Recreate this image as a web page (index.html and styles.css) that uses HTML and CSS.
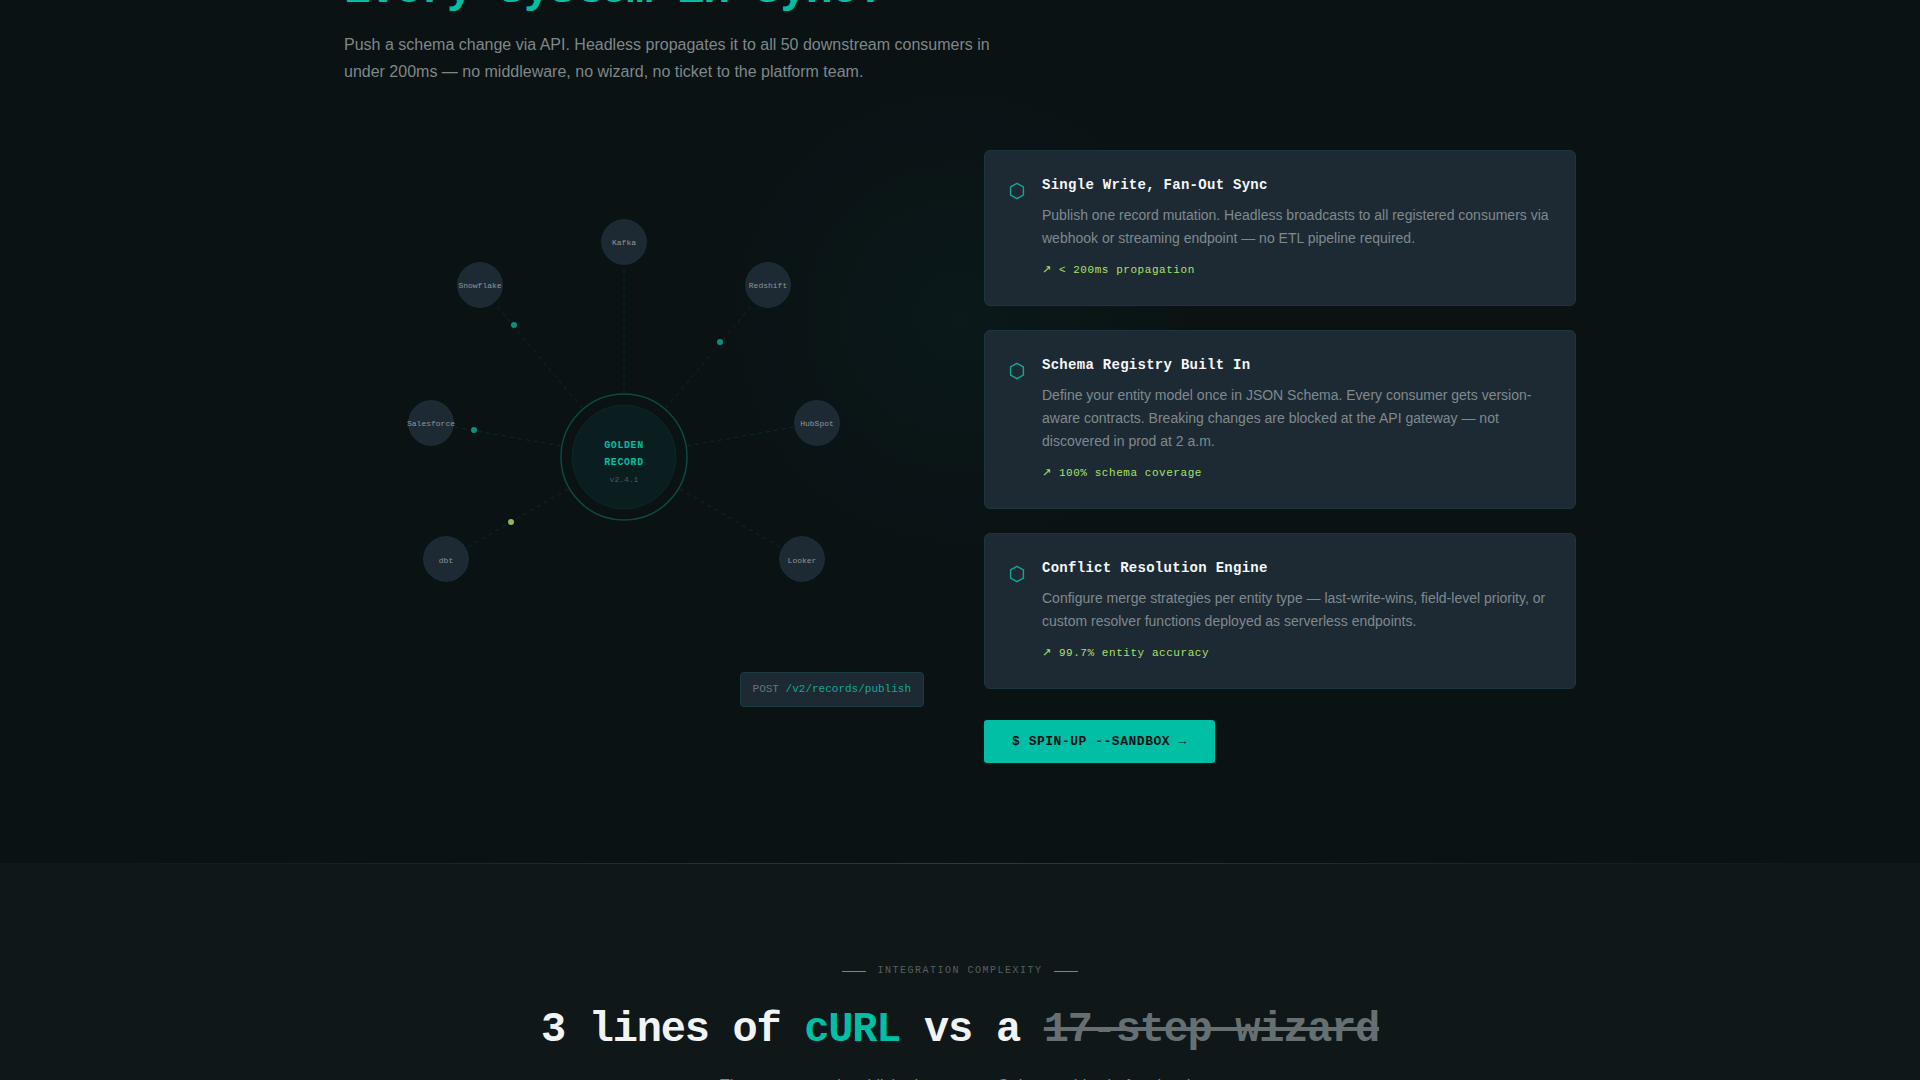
FILE: index.html
```html
<!DOCTYPE html>
<html lang="en">
<head>
    <meta charset="UTF-8">
    <meta name="viewport" content="width=device-width, initial-scale=1.0">
    <title>Headless</title>
    <link rel="stylesheet" href="styles.css">
</head>
<body>
    <section class="sync">
        <div class="container">
            <h2 class="sync-title">Every system in sync.</h2>
            <p class="sync-lead">Push a schema change via API. Headless propagates it to all 50 downstream consumers in under 200ms — no middleware, no wizard, no ticket to the platform team.</p>

            <div class="sync-grid">
                <div class="hub">
                    <svg class="hub-map" viewBox="0 0 560 560" role="img" aria-label="Golden record hub">
                        <!-- Spokes -->
                        <g class="spokes">
                            <line x1="280" y1="216" x2="280" y2="88" />
                            <line x1="322" y1="231" x2="409" y2="127" />
                            <line x1="343" y1="269" x2="450" y2="250" />
                            <line x1="336" y1="312" x2="438" y2="371" />
                            <line x1="224" y1="312" x2="122" y2="371" />
                            <line x1="217" y1="269" x2="110" y2="250" />
                            <line x1="238" y1="231" x2="151" y2="127" />
                        </g>

                        <!-- Golden record -->
                        <circle class="ring" cx="280" cy="280" r="63" />
                        <circle class="core" cx="280" cy="280" r="52" />
                        <text class="core-name" x="280" y="271">GOLDEN</text>
                        <text class="core-name" x="280" y="288">RECORD</text>
                        <text class="core-version" x="280" y="305">v2.4.1</text>

                        <!-- Consumers -->
                        <g class="nodes">
                            <circle cx="280" cy="65" r="22.3" />
                            <circle cx="424" cy="108" r="22.3" />
                            <circle cx="473" cy="246" r="22.3" />
                            <circle cx="458" cy="382" r="22.3" />
                            <circle cx="102" cy="382" r="22.3" />
                            <circle cx="87" cy="246" r="22.3" />
                            <circle cx="136" cy="108" r="22.3" />
                            <text x="280" y="68">Kafka</text>
                            <text x="424" y="111">Redshift</text>
                            <text x="473" y="249">HubSpot</text>
                            <text x="458" y="386">Looker</text>
                            <text x="102" y="386">dbt</text>
                            <text x="87" y="249">Salesforce</text>
                            <text x="136" y="111">Snowflake</text>
                        </g>

                        <!-- Packets in flight -->
                        <g class="packets">
                            <circle cx="170" cy="148" r="3" />
                            <circle cx="376" cy="165" r="3" />
                            <circle cx="130" cy="253" r="3" />
                            <circle class="packet-lime" cx="167" cy="345" r="3" />
                        </g>
                    </svg>
                    <div class="endpoint">POST <span>/v2/records/publish</span></div>
                </div>

                <div class="features">
                    <article class="card">
                        <svg class="card-icon" viewBox="0 0 17 18" aria-hidden="true"><path d="M8 1.3 14.4 5v8L8 16.7 1.6 13V5z" /></svg>
                        <div>
                            <h3>Single Write, Fan-Out Sync</h3>
                            <p>Publish one record mutation. Headless broadcasts to all registered consumers via webhook or streaming endpoint — no ETL pipeline required.</p>
                            <div class="metric">↗ &lt; 200ms propagation</div>
                        </div>
                    </article>
                    <article class="card">
                        <svg class="card-icon" viewBox="0 0 17 18" aria-hidden="true"><path d="M8 1.3 14.4 5v8L8 16.7 1.6 13V5z" /></svg>
                        <div>
                            <h3>Schema Registry Built In</h3>
                            <p>Define your entity model once in JSON Schema. Every consumer gets version-aware contracts. Breaking changes are blocked at the API gateway — not discovered in prod at 2 a.m.</p>
                            <div class="metric">↗ 100% schema coverage</div>
                        </div>
                    </article>
                    <article class="card">
                        <svg class="card-icon" viewBox="0 0 17 18" aria-hidden="true"><path d="M8 1.3 14.4 5v8L8 16.7 1.6 13V5z" /></svg>
                        <div>
                            <h3>Conflict Resolution Engine</h3>
                            <p>Configure merge strategies per entity type — last-write-wins, field-level priority, or custom resolver functions deployed as serverless endpoints.</p>
                            <div class="metric">↗ 99.7% entity accuracy</div>
                        </div>
                    </article>
                    <button type="button" class="btn">$ SPIN-UP --SANDBOX →</button>
                </div>
            </div>
        </div>
    </section>

    <section class="compare">
        <div class="container">
            <div class="eyebrow">INTEGRATION COMPLEXITY</div>
            <h2>3 lines of <span class="teal">cURL</span> vs a <s>17-step wizard</s></h2>
            <p>The same record, published two ways. Only one ships before lunch.</p>
        </div>
    </section>
</body>
</html>
```
FILE: styles.css
```css
* {
    box-sizing: border-box;
    margin: 0;
    padding: 0;
}
html {
    background: #0f1719;
}
body {
    height: 100vh;
    overflow: hidden;
    background: #0f1719;
    color: #f0f4f4;
    font-family: "Liberation Sans", Arial, sans-serif;
    font-size: 16px;
}
.container {
    max-width: 1280px;
    margin: 0 auto;
    padding: 0 24px;
}

/* Sync section */
.sync {
    display: flow-root;
    padding-bottom: 100px;
    background: radial-gradient(circle at 50% 318px, rgba(0, 191, 165, 0.04), transparent 245px), #0a1214;
}
/* scrolled so that only the foot of the title shows */
.sync-title {
    margin-top: -36px;
    padding-bottom: 14px;
    color: #00bfa5;
    font-family: "Liberation Mono", monospace;
    font-size: 45px;
    line-height: 53px;
    letter-spacing: -0.03em;
}
.sync-lead {
    max-width: 660px;
    color: #7f8789;
    line-height: 27px;
}
.sync-grid {
    display: grid;
    grid-template-columns: 1fr 1fr;
    gap: 48px;
    align-items: center;
    margin-top: 65px;
}
.hub {
    position: relative;
}
.hub-map {
    display: block;
    width: 100%;
    max-width: 560px;
    font-family: "Liberation Mono", monospace;
}
.hub-map text {
    text-anchor: middle;
}
.spokes line {
    stroke: rgba(0, 191, 165, 0.15);
    stroke-dasharray: 4 4;
}
.ring {
    fill: none;
    stroke: #0c4a43;
    stroke-width: 1.5;
}
.core {
    fill: #0a1e20;
    stroke: #0b2728;
}
.core-name {
    fill: #00bfa5;
    font-size: 10px;
    font-weight: 700;
    letter-spacing: 0.06em;
}
.core-version {
    fill: #4d5d60;
    font-size: 8px;
}
.nodes circle {
    fill: #1e2a33;
    stroke: #1b3339;
}
.nodes text {
    fill: #8c9699;
    font-size: 8px;
}
.packets circle {
    fill: #0d8f7e;
}
.packets .packet-lime {
    fill: #8fb657;
}
.endpoint {
    position: absolute;
    right: 12px;
    bottom: 30px;
    padding: 8px 12px;
    border: 1px solid #1b3b3f;
    border-radius: 4px;
    background: #1e2a33;
    color: #687478;
    font-family: "Liberation Mono", monospace;
    font-size: 11px;
    line-height: 17px;
}
.endpoint span {
    color: #12a793;
}

/* Feature cards */
.features {
    display: flex;
    flex-direction: column;
    align-items: flex-start;
    gap: 24px;
}
.card {
    display: flex;
    gap: 16px;
    width: 100%;
    padding: 24px;
    border: 1px solid #1d363c;
    border-radius: 6px;
    background: #1e2a33;
}
.card-icon {
    flex: none;
    width: 17px;
    height: 18px;
    margin-top: 7px;
    fill: none;
    stroke: #10a893;
    stroke-width: 1.4;
}
.card h3 {
    margin-bottom: 8px;
    color: #f4f7f7;
    font-family: "Liberation Mono", monospace;
    font-size: 14px;
    line-height: 21px;
    letter-spacing: 0.02em;
}
.card p {
    color: #7f898e;
    font-size: 14px;
    line-height: 23px;
}
.metric {
    margin-top: 10px;
    padding-bottom: 1px;
    color: #a8e06c;
    font-family: "Liberation Mono", "DejaVu Sans", monospace;
    font-size: 11px;
    line-height: 20px;
    letter-spacing: 0.05em;
}
.btn {
    margin-top: 7px;
    padding: 14px 28px;
    border: none;
    border-radius: 3px;
    background: #00bfa5;
    color: #0a1214;
    font-family: "Liberation Mono", monospace;
    font-size: 13px;
    font-weight: 700;
    line-height: 15px;
    letter-spacing: 0.04em;
    cursor: pointer;
}
.btn:hover {
    background: #12d1b7;
}

/* Comparison section */
.compare {
    text-align: center;
}
.compare::before {
    content: "";
    display: block;
    height: 1px;
    background: linear-gradient(90deg, transparent 5%, #0c4a43, transparent 95%);
}
.eyebrow {
    display: flex;
    justify-content: center;
    align-items: center;
    gap: 11px;
    margin-top: 97px;
    color: #566063;
    font-family: "Liberation Mono", monospace;
    font-size: 10px;
    line-height: 20px;
    letter-spacing: 0.15em;
}
.eyebrow::before,
.eyebrow::after {
    content: "";
    width: 24px;
    height: 1px;
    background: #00bfa5;
}
.compare h2 {
    margin-top: 25px;
    font-family: "Liberation Mono", monospace;
    font-size: 42px;
    line-height: 48px;
    letter-spacing: -0.03em;
}
.compare .teal {
    color: #00bfa5;
}
.compare s {
    color: #667073;
}
.compare p {
    margin-top: 18px;
    color: #7f8789;
    line-height: 27px;
}
```
